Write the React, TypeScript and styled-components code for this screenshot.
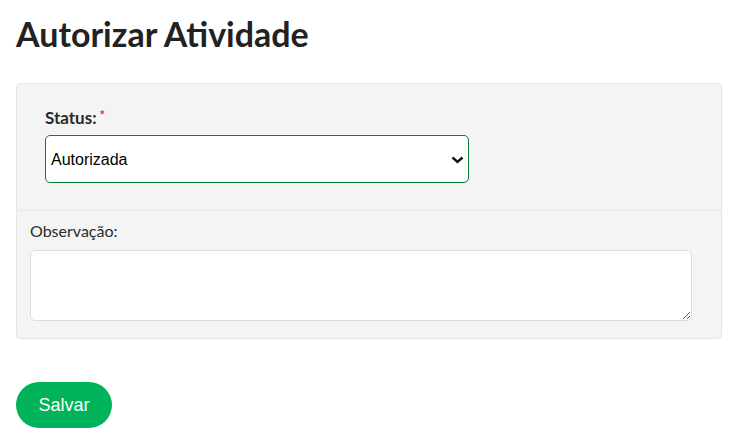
import React from "react";
import styled, { createGlobalStyle } from "styled-components";

const Global = createGlobalStyle`
  html, body { margin: 0; padding: 0; background: #fff; }
  body { font-family: Lato, "Noto Sans", sans-serif; color: #222; }
  * { box-sizing: border-box; }
`;

const Page = styled.div`
  padding: 14px 13px 0 16px;
`;

const Title = styled.h1`
  margin: 0;
  font-family: Lato, sans-serif;
  font-weight: 700;
  font-size: 34px;
  line-height: 40px;
  color: #222;
`;

const Card = styled.div`
  margin-top: 29px;
  background: #f4f4f4;
  border: 1px solid #e6e6e6;
  border-radius: 4px;
`;

const StatusBox = styled.div`
  border-bottom: 1px solid #e8e8e8;
  border-radius: 4px;
  padding: 23px 28px 27px 28px;
`;

const FieldLabel = styled.label<{ $bold?: boolean }>`
  display: block;
  font-family: Lato, sans-serif;
  font-weight: ${(p) => (p.$bold ? 700 : 400)};
  font-size: ${(p) => (p.$bold ? "17px" : "16px")};
  line-height: 22px;
  color: #2a2a2a;
`;

const Required = styled.span`
  color: #e0314b;
  margin-left: 3px;
  font-size: 13px;
  vertical-align: top;
  position: relative;
  top: -3px;
`;

const SelectWrap = styled.div`
  position: relative;
  margin-top: 6px;
  width: 424px;
`;

const Select = styled.select`
  display: block;
  appearance: none;
  width: 100%;
  height: 48px;
  padding: 0 30px 0 5px;
  font-family: "Liberation Sans", Arial, sans-serif;
  font-size: 16px;
  color: #000;
  background: #fff;
  border: 1px solid #0a7d3a;
  border-radius: 5px;
  outline: none;
`;

const Chevron = styled.svg`
  position: absolute;
  right: 5px;
  top: 21px;
  width: 13px;
  height: 8px;
  pointer-events: none;
`;

const ObsBox = styled.div`
  padding: 9px 29px 17px 13px;
`;

const TextArea = styled.textarea`
  display: block;
  margin-top: 8px;
  width: 662px;
  height: 71px;
  background: #fff;
  border: 1px solid #dcdcdc;
  border-radius: 5px;
  resize: both;
  font-family: "Liberation Sans", Arial, sans-serif;
  font-size: 16px;
  outline: none;
`;

const SaveButton = styled.button`
  margin-top: 43px;
  width: 96px;
  height: 46px;
  border: none;
  border-radius: 23px;
  background: #00b259;
  color: #fff;
  font-family: "Liberation Sans", Arial, sans-serif;
  font-size: 18px;
  cursor: pointer;
`;

export default function App() {
  return (
    <>
      <Global />
      <Page>
        <Title>Autorizar Atividade</Title>
        <Card>
          <StatusBox>
            <FieldLabel $bold htmlFor="status">
              Status:<Required>*</Required>
            </FieldLabel>
            <SelectWrap>
              <Select id="status" defaultValue="Autorizada">
                <option>Autorizada</option>
                <option>Não autorizada</option>
              </Select>
              <Chevron viewBox="0 0 13 8" aria-hidden="true">
                <polyline
                  points="1.5,1.5 6.5,6 11.5,1.5"
                  fill="none"
                  stroke="#111"
                  strokeWidth="2.4"
                />
              </Chevron>
            </SelectWrap>
          </StatusBox>
          <ObsBox>
            <FieldLabel htmlFor="obs">Observação:</FieldLabel>
            <TextArea id="obs" />
          </ObsBox>
        </Card>
        <SaveButton>Salvar</SaveButton>
      </Page>
    </>
  );
}
